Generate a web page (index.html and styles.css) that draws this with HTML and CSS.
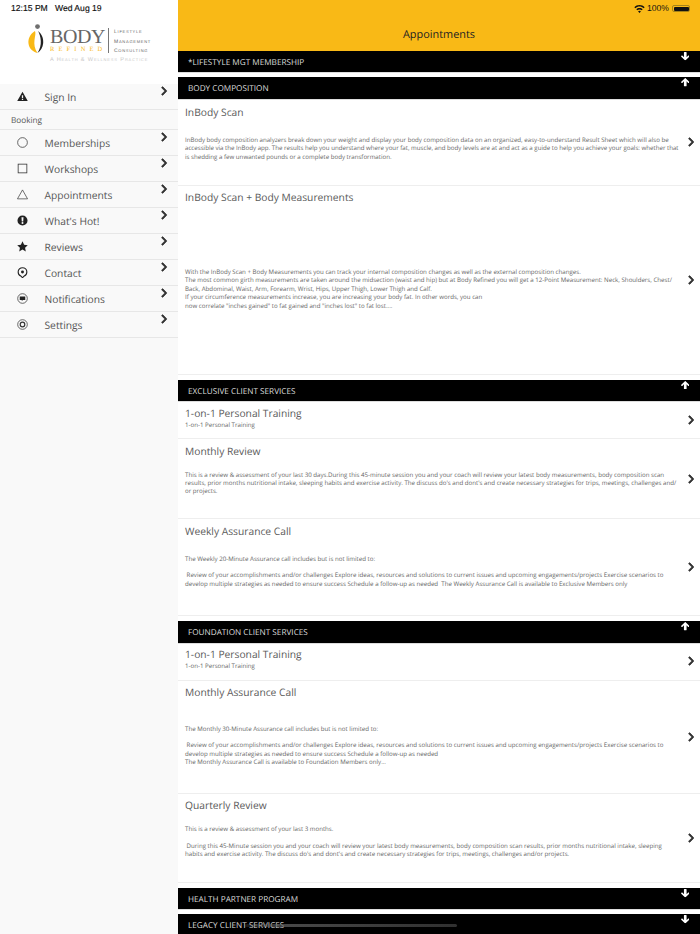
FILE: index.html
```html
<!DOCTYPE html>
<html lang="en">
<head>
    <meta charset="UTF-8">
    <meta name="viewport" content="width=device-width, initial-scale=1.0">
    <title>Body Refined | Appointments</title>
    <link rel="stylesheet" href="styles.css">
</head>
<body>
    <svg class="defs" width="0" height="0">
        <symbol id="chev" viewBox="0 0 320 512"><path d="M285.476 272.971L91.132 467.314c-9.373 9.373-24.569 9.373-33.941 0l-22.667-22.667c-9.357-9.357-9.375-24.522-.04-33.901L188.505 256 34.484 101.255c-9.335-9.379-9.317-24.544.04-33.901l22.667-22.667c9.373-9.373 24.569-9.373 33.941 0L285.475 239.03c9.373 9.372 9.373 24.568.001 33.941z" stroke-width="34" stroke-linejoin="round"/></symbol>
        <symbol id="arrow-up" viewBox="0 0 448 448"><path d="M34.9 257.5l-22.2-22.2c-9.4-9.4-9.4-24.6 0-33.9L207 7c9.4-9.4 24.6-9.4 33.9 0l194.3 194.3c9.4 9.4 9.4 24.6 0 33.9L413 257.4c-9.5 9.5-25 9.3-34.3-.4L294 176v248c0 13.3-10.7 24-24 24h-92c-13.3 0-24-10.7-24-24V176L69.2 257.1c-9.3 9.8-24.8 10-34.3.4z"/></symbol>
    </svg>

    <div class="app">
        <aside class="sidebar">
            <div class="side-top">
                <div class="status-time">12:15 PM &nbsp;&nbsp;Wed Aug 19</div>
                <div class="logo">
                    <div class="logo-main">
                        <svg class="logo-mark" viewBox="0 0 17 30" width="17" height="30">
                            <circle cx="9.5" cy="2.6" r="2.4" fill="#6f6f6f"/>
                            <path d="M7 7C2 10 0 15 0.5 19.5C1 24.5 5 28 9.5 29C6.5 25 6 20 6.5 16C7 12 8 9 7 7Z" fill="#f9b916"/>
                            <path d="M10 7C14 10 15.6 14.5 15.2 19C14.8 23.5 12.5 27 9.5 29C12 25 13 21 12.8 17C12.6 13 11.5 9.5 10 7Z" fill="#222"/>
                        </svg>
                        <div class="logo-name">
                            <div class="logo-body">BODY</div>
                            <div class="logo-refined">REFINED</div>
                        </div>
                        <div class="logo-lines">
                            <span>Lifestyle</span>
                            <span>Management</span>
                            <span>Consulting</span>
                        </div>
                    </div>
                    <div class="logo-tag">A Health &amp; Wellness Practice</div>
                </div>
            </div>

            <nav class="menu">
                <a class="menu-row">
                    <svg class="menu-icon" viewBox="0 0 24 24"><path d="M12 1.500L23.500 22H.5Z M10.600 9v7h2.800V9Z M10.600 17.300v2.600h2.800v-2.600Z" fill="#222" fill-rule="evenodd"/></svg>
                    <span class="menu-label">Sign In</span>
                    <svg class="menu-chev"><use href="#chev"/></svg>
                </a>
                <div class="menu-head">Booking</div>
                <a class="menu-row">
                    <svg class="menu-icon" viewBox="0 0 24 24"><circle cx="12" cy="12" r="10.600" fill="none" stroke="#333" stroke-width="1.600"/></svg>
                    <span class="menu-label">Memberships</span>
                    <svg class="menu-chev"><use href="#chev"/></svg>
                </a>
                <a class="menu-row">
                    <svg class="menu-icon" viewBox="0 0 24 24"><rect x="2.500" y="2.500" width="19" height="19" fill="none" stroke="#333" stroke-width="1.700"/></svg>
                    <span class="menu-label">Workshops</span>
                    <svg class="menu-chev"><use href="#chev"/></svg>
                </a>
                <a class="menu-row">
                    <svg class="menu-icon" viewBox="0 0 24 24"><path d="M12 2L23 21.500H1Z" fill="none" stroke="#333" stroke-width="1.500"/></svg>
                    <span class="menu-label">Appointments</span>
                    <svg class="menu-chev"><use href="#chev"/></svg>
                </a>
                <a class="menu-row">
                    <svg class="menu-icon" viewBox="0 0 24 24"><path d="M12 1a11 11 0 1 0 0 22a11 11 0 1 0 0-22Z M9.800 5h4.400l-.6 9h-3.200Z M12 15.400a2.200 2.200 0 1 1 0 4.400a2.200 2.200 0 1 1 0-4.400Z" fill="#222" fill-rule="evenodd"/></svg>
                    <span class="menu-label">What's Hot!</span>
                    <svg class="menu-chev"><use href="#chev"/></svg>
                </a>
                <a class="menu-row">
                    <svg class="menu-icon" viewBox="0 0 24 24"><path d="M12 .8l3.500 7.400 8 1-5.900 5.500 1.600 8L12 18.700l-7.200 4 1.600-8L.5 9.200l8-1Z" fill="#222"/></svg>
                    <span class="menu-label">Reviews</span>
                    <svg class="menu-chev"><use href="#chev"/></svg>
                </a>
                <a class="menu-row">
                    <svg class="menu-icon" viewBox="0 0 24 24"><path d="M12 1.500a9.500 9.500 0 0 1 9.500 9.500c0 4.600-3.400 8-6.400 9L12 23.500 8.900 20c-3-1-6.400-4.400-6.400-9A9.500 9.500 0 0 1 12 1.500Z" fill="none" stroke="#222" stroke-width="2.400"/><circle cx="12" cy="11" r="3.200" fill="#222"/></svg>
                    <span class="menu-label">Contact</span>
                    <svg class="menu-chev"><use href="#chev"/></svg>
                </a>
                <a class="menu-row">
                    <svg class="menu-icon" viewBox="0 0 24 24"><circle cx="12" cy="12" r="10.500" fill="none" stroke="#333" stroke-width="1.600"/><path d="M6 7.500h12v7.500h-5l-2.500 2.500V15H6Z" fill="#222"/></svg>
                    <span class="menu-label">Notifications</span>
                    <svg class="menu-chev"><use href="#chev"/></svg>
                </a>
                <a class="menu-row">
                    <svg class="menu-icon" viewBox="0 0 24 24"><circle cx="12" cy="12" r="10.500" fill="none" stroke="#333" stroke-width="1.600"/><circle cx="12" cy="12" r="5" fill="none" stroke="#333" stroke-width="2.600"/></svg>
                    <span class="menu-label">Settings</span>
                    <svg class="menu-chev"><use href="#chev"/></svg>
                </a>
            </nav>
        </aside>

        <main class="main">
            <header class="topbar">
                <div class="status-right">
                    <svg class="wifi" viewBox="0 0 20 15" width="11" height="8"><path d="M10 0C6 0 3 1.500 0.300 4L2.300 6C4.500 4 7 3 10 3s5.500 1 7.700 3l2-2C17 1.500 14 0 10 0Z M10 5.500c-2.500 0-4.400 1-6 2.300l2 2C7 9 8.400 8.500 10 8.500s3 .5 4 1.300l2-2C14.400 6.500 12.500 5.500 10 5.500Z M10 11c-1.200 0-2 .4-2.600 1L10 15l2.600-3c-.6-.6-1.400-1-2.600-1Z" fill="#111"/></svg>
                    <span>100%</span>
                    <span class="battery"><span class="battery-fill"></span></span>
                </div>
                <h1 class="topbar-title">Appointments</h1>
            </header>

            <div class="bar">
                <span>*LIFESTYLE MGT MEMBERSHIP</span>
                <svg class="bar-arrow bar-arrow--down"><use href="#arrow-up"/></svg>
            </div>

            <div class="bar">
                <span>BODY COMPOSITION</span>
                <svg class="bar-arrow"><use href="#arrow-up"/></svg>
            </div>
            <div class="item item--scan">
                <div class="item-body">
                    <div class="item-title">InBody Scan</div>
                    <p class="item-desc gap-m">InBody body composition analyzers break down your weight and display your body composition data on an organized, easy-to-understand Result Sheet which will also be accessible via the InBody app. The results help you understand where your fat, muscle, and body levels are at and act as a guide to help you achieve your goals: whether that is shedding a few unwanted pounds or a complete body transformation.</p>
                </div>
                <svg class="item-chev"><use href="#chev"/></svg>
            </div>
            <div class="item item--measure last">
                <div class="item-body">
                    <div class="item-title">InBody Scan + Body Measurements</div>
                    <p class="item-desc gap-xl">With the InBody Scan + Body Measurements you can track your internal composition changes as well as the external composition changes.<br>The most common girth measurements are taken around the midsection (waist and hip) but at Body Refined you will get a 12-Point Measurement: Neck, Shoulders, Chest/<br>Back, Abdominal, Waist, Arm, Forearm, Wrist, Hips, Upper Thigh, Lower Thigh and Calf.<br>If your circumference measurements increase, you are increasing your body fat. In other words, you can<br>now correlate "inches gained" to fat gained and "inches lost" to fat lost....</p>
                </div>
                <svg class="item-chev"><use href="#chev"/></svg>
            </div>

            <div class="bar">
                <span>EXCLUSIVE CLIENT SERVICES</span>
                <svg class="bar-arrow"><use href="#arrow-up"/></svg>
            </div>
            <div class="item item--short">
                <div class="item-body">
                    <div class="item-title">1-on-1 Personal Training</div>
                    <p class="item-desc gap-s">1-on-1 Personal Training</p>
                </div>
                <svg class="item-chev"><use href="#chev"/></svg>
            </div>
            <div class="item item--review">
                <div class="item-body">
                    <div class="item-title">Monthly Review</div>
                    <p class="item-desc gap-r">This is a review &amp; assessment of your last 30 days.During this 45-minute session you and your coach will review your latest body measurements, body composition scan<br>results, prior months nutritional intake, sleeping habits and exercise activity. The discuss do's and dont's and create necessary strategies for trips, meetings, challenges and/<br>or projects.</p>
                </div>
                <svg class="item-chev"><use href="#chev"/></svg>
            </div>
            <div class="item item--weekly last">
                <div class="item-body">
                    <div class="item-title">Weekly Assurance Call</div>
                    <p class="item-desc gap-m">The Weekly 20-Minute Assurance call includes but is not limited to:<br><br>&nbsp;Review of your accomplishments and/or challenges Explore ideas, resources and solutions to current issues and upcoming engagements/projects Exercise scenarios to<br>develop multiple strategies as needed to ensure success Schedule a follow-up as needed &nbsp;The Weekly Assurance Call is available to Exclusive Members only</p>
                </div>
                <svg class="item-chev"><use href="#chev"/></svg>
            </div>

            <div class="bar">
                <span>FOUNDATION CLIENT SERVICES</span>
                <svg class="bar-arrow"><use href="#arrow-up"/></svg>
            </div>
            <div class="item item--short">
                <div class="item-body">
                    <div class="item-title">1-on-1 Personal Training</div>
                    <p class="item-desc gap-s">1-on-1 Personal Training</p>
                </div>
                <svg class="item-chev"><use href="#chev"/></svg>
            </div>
            <div class="item item--monthly">
                <div class="item-body">
                    <div class="item-title">Monthly Assurance Call</div>
                    <p class="item-desc gap-l">The Monthly 30-Minute Assurance call includes but is not limited to:<br><br>&nbsp;Review of your accomplishments and/or challenges Explore ideas, resources and solutions to current issues and upcoming engagements/projects Exercise scenarios to<br>develop multiple strategies as needed to ensure success Schedule a follow-up as needed<br>The Monthly Assurance Call is available to Foundation Members only...</p>
                </div>
                <svg class="item-chev"><use href="#chev"/></svg>
            </div>
            <div class="item item--quarterly last">
                <div class="item-body">
                    <div class="item-title">Quarterly Review</div>
                    <p class="item-desc gap-r">This is a review &amp; assessment of your last 3 months.<br><br>&nbsp;During this 45-Minute session you and your coach will review your latest body measurements, body composition scan results, prior months nutritional intake, sleeping<br>habits and exercise activity. The discuss do's and dont's and create necessary strategies for trips, meetings, challenges and/or projects.</p>
                </div>
                <svg class="item-chev"><use href="#chev"/></svg>
            </div>

            <div class="bar">
                <span>HEALTH PARTNER PROGRAM</span>
                <svg class="bar-arrow bar-arrow--down"><use href="#arrow-up"/></svg>
            </div>
            <div class="bar">
                <span>LEGACY CLIENT SERVICES</span>
                <svg class="bar-arrow bar-arrow--down"><use href="#arrow-up"/></svg>
            </div>
        </main>
    </div>

    <div class="home-indicator"></div>
</body>
</html>
```

FILE: styles.css
```css
* {
    margin: 0;
    padding: 0;
    box-sizing: border-box;
}

body {
    font-family: 'Open Sans', sans-serif;
    text-rendering: geometricPrecision;
    color: #555;
    background: #fff;
    height: 934px;
    overflow: hidden;
}

.defs {
    position: absolute;
}

.app {
    display: flex;
    height: 934px;
}

/* Sidebar */
.sidebar {
    width: 178px;
    flex: none;
    background: #f9f9f9;
}

.side-top {
    height: 84px;
    background: #fff;
    padding: 3px 0 0 11px;
}

.status-time {
    font-family: 'Liberation Sans', sans-serif;
    font-size: 8.6px;
    line-height: 11px;
    color: #111;
    -webkit-text-stroke: 0.15px #111;
}

.logo {
    margin: 10px 0 0 17px;
}

.logo-main {
    display: flex;
    align-items: flex-start;
}

.logo-mark {
    flex: none;
}

.logo-name {
    margin: 4px 0 0 5px;
    width: 59px;
    border-right: 1px solid #777;
    height: 25px;
}

.logo-body {
    font-family: 'Liberation Serif', serif;
    font-size: 20px;
    line-height: 18px;
    color: #666;
    letter-spacing: -0.4px;
}

.logo-refined {
    font-family: 'Liberation Serif', serif;
    font-size: 6.4px;
    line-height: 6px;
    letter-spacing: 4.2px;
    color: #f9b916;
    margin-top: 1px;
}

.logo-lines {
    margin: 5px 0 0 5px;
    display: flex;
    flex-direction: column;
    gap: 3.5px;
    font-family: 'Liberation Sans', sans-serif;
    font-size: 5px;
    line-height: 6px;
    letter-spacing: 0.75px;
    font-variant: small-caps;
    color: #666;
}

.logo-tag {
    margin: 3px 0 0 22px;
    font-family: 'Liberation Sans', sans-serif;
    font-size: 5.6px;
    line-height: 6px;
    letter-spacing: 0.85px;
    font-variant: small-caps;
    color: #c9c9c9;
    white-space: nowrap;
}

.menu-row {
    height: 26px;
    display: flex;
    align-items: center;
    border-bottom: 1px solid #e7e7e7;
    position: relative;
    padding-left: 17px;
}

.menu-icon {
    width: 11px;
    height: 11px;
    flex: none;
}

.menu-label {
    margin-left: 16.5px;
    padding-top: 2px;
    font-size: 10.25px;
    color: #555;
}

.menu-chev {
    width: 6.5px;
    height: 10px;
    fill: #333;
    stroke: #333;
    position: absolute;
    right: 10.5px;
    top: 2px;
}

.menu-head {
    height: 20px;
    padding-left: 11px;
    font-size: 8.2px;
    line-height: 21px;
    color: #555;
    border-bottom: 1px solid #e7e7e7;
}

/* Main column */
.main {
    flex: 1;
    min-width: 0;
    background: #fff;
}

.topbar {
    height: 51px;
    background: #f9b916;
    position: relative;
    padding-top: 26px;
}

.topbar-title {
    font-size: 10.9px;
    font-weight: 400;
    line-height: 18px;
    text-align: center;
    color: #222;
}

.status-right {
    position: absolute;
    top: 3px;
    right: 10px;
    display: flex;
    align-items: center;
    gap: 2px;
    font-family: 'Liberation Sans', sans-serif;
    font-size: 8.6px;
    line-height: 11px;
    color: #111;
}

.battery {
    width: 18px;
    height: 7px;
    margin-left: 1px;
    padding: 0.5px;
    border: 1px solid #a5831a;
    border-radius: 2px;
    display: flex;
}

.battery-fill {
    flex: 1;
    background: #111;
    border-radius: 1px;
}

.bar {
    height: 21.4px;
    background: #000;
    display: flex;
    justify-content: space-between;
    padding: 0 11px 0 10px;
    font-size: 8.2px;
    line-height: 23.5px;
    color: #ddd;
    margin-bottom: 5px;
    box-shadow: 0 1px 0 #ddd;
}

.bar span {
    white-space: nowrap;
}

.bar-arrow {
    width: 8.5px;
    height: 8.5px;
    margin-top: 1px;
    fill: #fff;
    flex: none;
}

.bar-arrow--down {
    transform: scaleY(-1);
}

.bar:has(+ .item) {
    margin-bottom: 0;
}

.item {
    display: flex;
    align-items: center;
    border-bottom: 1px solid #eee;
    padding: 0 6px 0 7px;
}

.item.last {
    margin-bottom: 5px;
}

.item--scan { height: 87px; }
.item--measure { height: 189.2px; }
.item--short { height: 38px; }
.item--review { height: 80px; }
.item--weekly { height: 97px; }
.item--monthly { height: 113px; }
.item--quarterly { height: 89px; }

.item-body {
    flex: 1;
    min-width: 0;
    align-self: flex-start;
    padding-top: 4.3px;
}

.item--scan .item-body {
    padding-top: 6.3px;
}

.item-title {
    font-size: 10.25px;
    line-height: 16px;
    color: #5a5a5a;
}

.item-desc {
    font-size: 6.15px;
    line-height: 8.4px;
    color: #666;
}

.gap-s { margin-top: -1px; }
.gap-r { margin-top: 11px; }
.gap-m { margin-top: 15px; }
.gap-l { margin-top: 23.5px; }
.gap-xl { margin-top: 62px; }

.item-chev {
    width: 6.5px;
    height: 10px;
    flex: none;
    fill: #333;
    stroke: #333;
    margin-left: 5px;
}

.home-indicator {
    position: absolute;
    left: 245px;
    top: 924px;
    width: 212px;
    height: 3px;
    border-radius: 2px;
    background: linear-gradient(to right, rgba(120,120,120,0.2), rgba(90,90,90,0.8) 20%, rgba(60,60,60,0.8));
}
```
